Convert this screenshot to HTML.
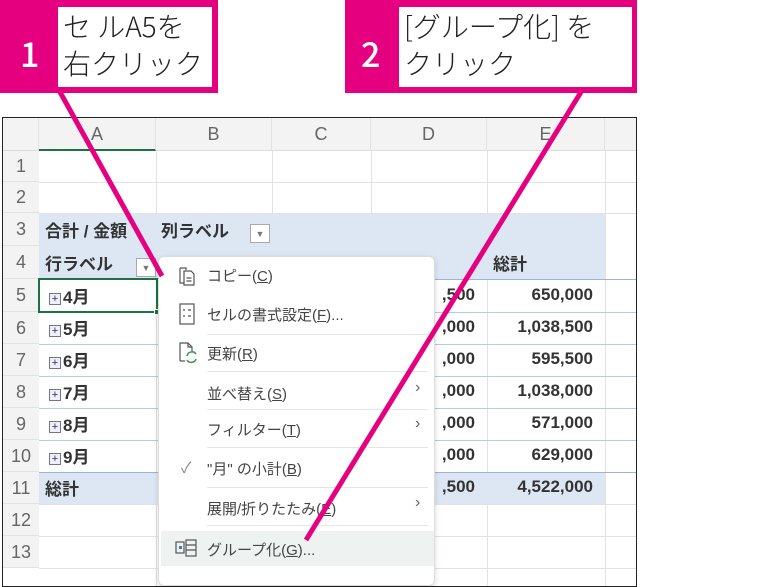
<!DOCTYPE html>
<html><head><meta charset="utf-8"><style>
*{margin:0;padding:0;box-sizing:border-box}
body{width:783px;height:576px;background:#fff;position:relative;overflow:hidden;font-family:"Liberation Sans","Noto Sans CJK JP",sans-serif}
.a{position:absolute}
.frame{left:2px;top:117px;width:635px;height:470px;border:1.5px solid #222;background:#fff;overflow:hidden}
.hc{position:absolute;top:0;height:33px;background:#f3f3f3;color:#666;font-size:18px;text-align:center;line-height:33px;border-right:1px solid #e2e2e2;border-bottom:1px solid #dcdcdc}
.rh{position:absolute;left:0;width:36px;background:#f3f3f3;color:#666;font-size:18px;text-align:center;border-bottom:1px solid #e2e2e2}
.vl{position:absolute;top:33px;bottom:0;width:1px;background:#e2e2e2}
.hl{position:absolute;left:36px;right:0;height:1px;background:#e2e2e2}
.t{position:absolute;font-size:17px;font-weight:bold;color:#333;white-space:nowrap}
.n{position:absolute;font-size:17px;font-weight:bold;color:#333;text-align:right}
.mi{position:absolute;left:48px;font-size:15px;color:#444;white-space:nowrap}
.sep{position:absolute;left:48px;right:6px;height:1px;background:#e5e5e5}
.arr{position:absolute;left:256px;color:#666;font-size:16px}
.plus{display:inline-block;width:12px;height:12px;border:1px solid #777;font-size:11px;line-height:10px;text-align:center;font-weight:normal;vertical-align:1px;margin-right:2px;background:#eef}
.ct{position:absolute;font-family:"Noto Sans CJK JP","Liberation Sans",sans-serif;font-weight:300;font-size:28px;line-height:37px;color:#222;white-space:nowrap}
.num{position:absolute;top:28px;color:#fff;font-size:34px;font-family:'Noto Sans CJK JP',sans-serif;font-weight:500}
</style></head><body>
<div class="a" style="left:0;top:0;width:218px;height:93px;background:#e4007f"></div>
<div class="a" style="left:58px;top:7px;width:154px;height:80px;background:#fff"></div>
<div class="num" style="left:20px">1</div>
<div class="ct" style="left:63px;top:8px">セ ルA5を<br>右クリック</div>
<div class="a" style="left:345px;top:0;width:292px;height:93px;background:#e4007f"></div>
<div class="a" style="left:399px;top:7px;width:233px;height:80px;background:#fff"></div>
<div class="num" style="left:361px">2</div>
<div class="ct" style="left:404px;top:8px">[グループ化] を<br>クリック</div>

<div class="a frame">
 <div class="hc" style="left:0;width:36px"></div>
 <div class="hc" style="left:36px;width:117px;border-bottom:2px solid #1e7145">A</div>
 <div class="hc" style="left:153px;width:116px">B</div>
 <div class="hc" style="left:269px;width:99px">C</div>
 <div class="hc" style="left:368px;width:116px">D</div>
 <div class="hc" style="left:484px;width:118px">E</div>
 <div class="hc" style="left:602px;width:40px"></div>
 <div class="vl" style="left:153px"></div><div class="vl" style="left:269px"></div><div class="vl" style="left:368px"></div><div class="vl" style="left:484px"></div><div class="vl" style="left:602px"></div>
 <div class="a" style="left:36px;top:95px;width:566px;height:66px;background:#dde7f3"></div>
 <div class="a" style="left:36px;top:354px;width:566px;height:32px;background:#dde7f3"></div>
 <div class="rh" style="top:33px;height:31px;line-height:31px">1</div>
 <div class="rh" style="top:64px;height:31px;line-height:31px">2</div>
 <div class="rh" style="top:95px;height:33px;line-height:33px">3</div>
 <div class="rh" style="top:128px;height:33px;line-height:33px">4</div>
 <div class="rh" style="top:161px;height:33px;line-height:33px">5</div>
 <div class="rh" style="top:194px;height:32px;line-height:32px">6</div>
 <div class="rh" style="top:226px;height:32px;line-height:32px">7</div>
 <div class="rh" style="top:258px;height:32px;line-height:32px">8</div>
 <div class="rh" style="top:290px;height:32px;line-height:32px">9</div>
 <div class="rh" style="top:322px;height:32px;line-height:32px">10</div>
 <div class="rh" style="top:354px;height:32px;line-height:32px">11</div>
 <div class="rh" style="top:386px;height:32px;line-height:32px">12</div>
 <div class="rh" style="top:418px;height:32px;line-height:32px">13</div>
 <div class="hl" style="top:64px"></div><div class="hl" style="top:95px"></div>
 <div class="hl" style="top:161px;background:#9db4d6"></div>
 <div class="hl" style="top:194px;background:#b8c9e2"></div><div class="hl" style="top:226px;background:#b8c9e2"></div><div class="hl" style="top:258px;background:#b8c9e2"></div><div class="hl" style="top:290px;background:#b8c9e2"></div><div class="hl" style="top:322px;background:#b8c9e2"></div><div class="hl" style="top:354px;background:#9db4d6"></div>
 <div class="hl" style="top:386px"></div><div class="hl" style="top:418px"></div><div class="hl" style="top:450px"></div>
 <div class="t" style="left:42px;top:99px">合計 / 金額</div>
 <div class="t" style="left:158px;top:99px">列ラベル</div>
 <div class="a" style="left:247px;top:106px;width:20px;height:19px;border:1px solid #aaa;background:#fff;color:#777;font-size:9px;text-align:center;line-height:18px">▼</div>
 <div class="t" style="left:42px;top:132px">行ラベル</div>
 <div class="a" style="left:133px;top:140px;width:20px;height:19px;border:1px solid #aaa;background:#fff;color:#777;font-size:9px;text-align:center;line-height:18px">▼</div>
 <div class="t" style="left:490px;top:132px">総計</div>
 <div class="t" style="left:46px;top:165px"><span class="plus">+</span>4月</div>
 <div class="t" style="left:46px;top:197px"><span class="plus">+</span>5月</div>
 <div class="t" style="left:46px;top:229px"><span class="plus">+</span>6月</div>
 <div class="t" style="left:46px;top:261px"><span class="plus">+</span>7月</div>
 <div class="t" style="left:46px;top:293px"><span class="plus">+</span>8月</div>
 <div class="t" style="left:46px;top:325px"><span class="plus">+</span>9月</div>
 <div class="t" style="left:42px;top:357px">総計</div>
 <div class="n" style="left:400px;width:72px;top:167px">,500</div><div class="n" style="left:490px;width:100px;top:167px">650,000</div>
 <div class="n" style="left:400px;width:72px;top:199px">,000</div><div class="n" style="left:490px;width:100px;top:199px">1,038,500</div>
 <div class="n" style="left:400px;width:72px;top:231px">,000</div><div class="n" style="left:490px;width:100px;top:231px">595,500</div>
 <div class="n" style="left:400px;width:72px;top:263px">,000</div><div class="n" style="left:490px;width:100px;top:263px">1,038,000</div>
 <div class="n" style="left:400px;width:72px;top:295px">,000</div><div class="n" style="left:490px;width:100px;top:295px">571,000</div>
 <div class="n" style="left:400px;width:72px;top:327px">,000</div><div class="n" style="left:490px;width:100px;top:327px">629,000</div>
 <div class="n" style="left:400px;width:72px;top:359px">,500</div><div class="n" style="left:490px;width:100px;top:359px">4,522,000</div>
 <div class="a" style="left:35px;top:160px;width:120px;height:35px;border:2px solid #1e7145"></div>
 <div class="a" style="left:151px;top:191px;width:6px;height:6px;background:#1e7145;border:1px solid #fff"></div>
</div>

<div class="a" style="left:158px;top:256px;width:277px;height:330px;background:#fff;border:1px solid #ddd;border-radius:6px;box-shadow:0 2px 6px rgba(0,0,0,.15)">
 <svg class="a" style="left:18px;top:8px" width="20" height="22" viewBox="0 0 20 22" fill="none" stroke="#555" stroke-width="1.2"><path d="M3 3h6v2M3 3v15h4"/><path d="M7 6h7l3 3v11H7z"/><path d="M9.5 13h5M9.5 16h5"/></svg>
 <div class="mi" style="top:8px">コピー(<u>C</u>)</div>
 <svg class="a" style="left:20px;top:46px" width="16" height="22" viewBox="0 0 16 22" fill="none" stroke="#555" stroke-width="1.2"><rect x="1" y="1" width="14" height="20"/><path d="M4 7h2M9 7h3M4 13h2M9 13h3"/></svg>
 <div class="mi" style="top:47px">セルの書式設定(<u>F</u>)...</div>
 <div class="sep" style="top:77px"></div>
 <svg class="a" style="left:18px;top:84px" width="22" height="24" viewBox="0 0 22 24" fill="none" stroke-width="1.2"><path d="M3 20V2h8l4 4v4M11 2v4h4M3 20h5" stroke="#555"/><path d="M10 15a5 5 0 0 1 9-2M19 18a5 5 0 0 1-9 1" stroke="#3a9a4a" stroke-width="1.6"/></svg>
 <div class="mi" style="top:86px">更新(<u>R</u>)</div>
 <div class="sep" style="top:114px"></div>
 <div class="mi" style="top:126px">並べ替え(<u>S</u>)</div><div class="arr" style="top:122px">›</div>
 <div class="sep" style="top:152px"></div>
 <div class="mi" style="top:162px">フィルター(<u>T</u>)</div><div class="arr" style="top:158px">›</div>
 <div class="sep" style="top:190px"></div>
 <div class="a" style="left:22px;top:200px;color:#888;font-size:15px">✓</div>
 <div class="mi" style="top:201px">"月" の小計(<u>B</u>)</div>
 <div class="sep" style="top:230px"></div>
 <div class="mi" style="top:241px">展開/折りたたみ(<u>E</u>)</div><div class="arr" style="top:237px">›</div>
 <div class="sep" style="top:268px"></div>
 <div class="a" style="left:2px;top:274px;width:273px;height:35px;background:#eef3f1"></div>
 <svg class="a" style="left:16px;top:282px" width="24" height="18" viewBox="0 0 24 18" fill="none" stroke="#555" stroke-width="1.2"><rect x="1" y="3" width="8" height="11"/><rect x="4" y="7" width="3" height="3" fill="#3a7bd5" stroke="none"/><rect x="11" y="1" width="10" height="16"/><path d="M11 6h10M11 11h10"/></svg>
 <div class="mi" style="top:282px">グループ化(<u>G</u>)...</div>
</div>

<svg class="a" style="left:0;top:0" width="783" height="576"><g stroke="#e4007f" stroke-width="5"><line x1="60" y1="92" x2="162" y2="276"/><line x1="581" y1="92" x2="306" y2="540"/></g></svg>
</body></html>
